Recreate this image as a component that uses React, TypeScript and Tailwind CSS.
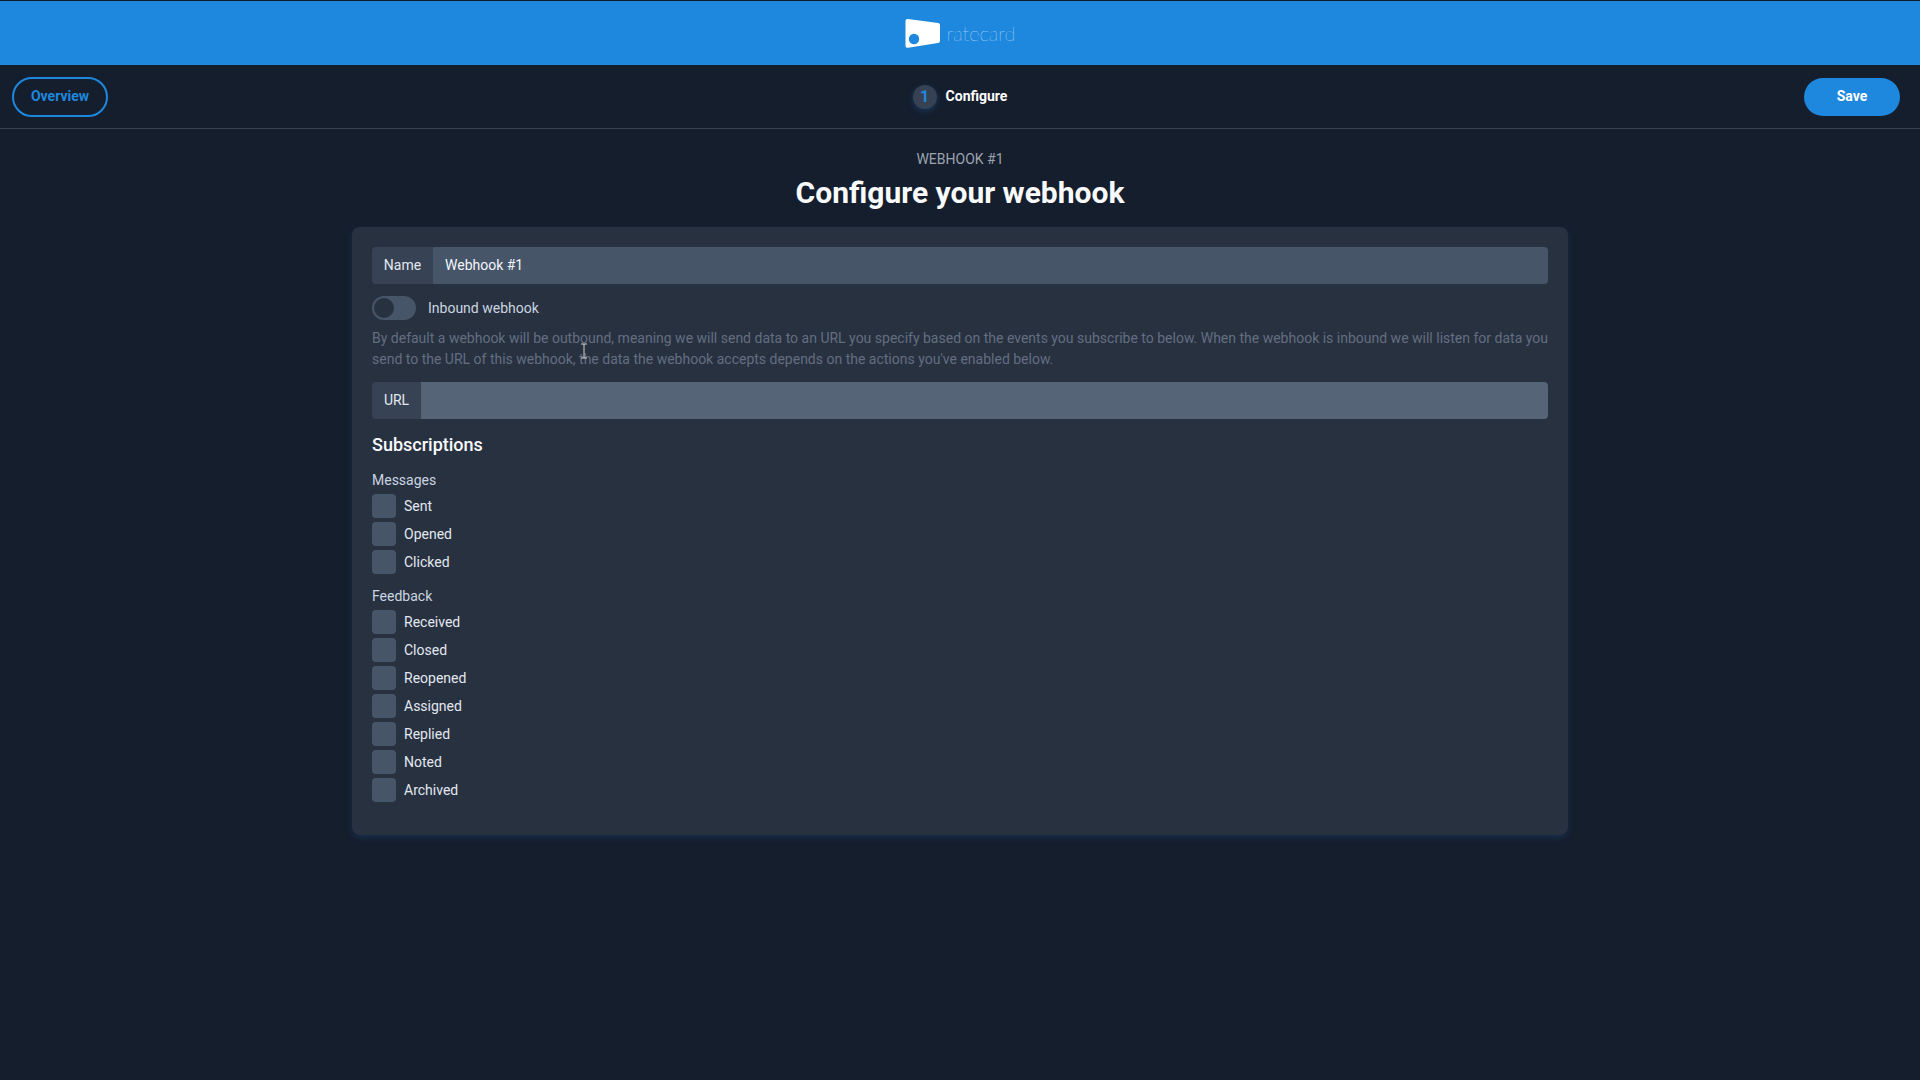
import React from 'react';

const messages = ['Sent', 'Opened', 'Clicked'];
const feedback = ['Received', 'Closed', 'Reopened', 'Assigned', 'Replied', 'Noted', 'Archived'];

const Logo: React.FC = () => (
  <svg width="36" height="31" viewBox="0 0 36 31" fill="none" xmlns="http://www.w3.org/2000/svg">
    <path d="M3 1L33 5C34.5 5.2 35 6 35 7.5V22.5C35 24 34.5 24.8 33 25L3 29.8C1.5 30 0.5 29 0.5 27.5V3C0.5 1.5 1.5 0.8 3 1Z" fill="white" />
    <circle cx="9" cy="21" r="5.2" fill="#1e88e0" />
  </svg>
);

const CheckRow: React.FC<{ label: string }> = ({ label }) => (
  <label className="flex items-center h-6 mb-1">
    <span className="w-6 h-6 rounded bg-[#475569] shrink-0" />
    <span className="ml-2 text-sm text-[#e2e8f0]">{label}</span>
  </label>
);

const InputRow: React.FC<{ label: string; value?: string; labelWidth: string; fill: string }> = ({ label, value, labelWidth, fill }) => (
  <div className="flex h-[37px] rounded overflow-hidden">
    <div className={`${labelWidth} flex items-center justify-center pb-px bg-[#374354] text-sm text-[#e2e8f0]`}>{label}</div>
    <div className={`flex-1 flex items-center px-3 pb-px text-sm text-[#f1f5f9] ${fill}`}>{value}</div>
  </div>
);

const App: React.FC = () => {
  return (
    <div className="relative min-h-[1080px] bg-[#151e2d] font-['Roboto',sans-serif] text-white">
      <div className="h-[65px] flex items-center justify-center gap-[6px] bg-[#1e88de] border-t border-[#0f1a2a]">
        <Logo />
        <span className="font-['Lato',sans-serif] font-thin text-xl leading-none text-white">ratecard</span>
      </div>

      <div className="h-[64px] flex items-center justify-between pl-3 pr-5 border-b border-[#374151]">
        <button className="w-[96px] h-10 pb-[2px] rounded-full border-2 border-[#1e88de] text-sm font-bold text-[#1e88de]">Overview</button>
        <div className="flex items-center gap-[9px] ml-[8px]">
          <span className="w-6 h-6 rounded-full bg-[#364254] flex items-center justify-center text-base font-bold text-[#1e88de] shadow-[0_2px_6px_rgba(30,136,222,0.25)]">1</span>
          <span className="pb-[2px] text-sm font-bold text-white">Configure</span>
        </div>
        <button className="w-[96px] h-[38px] pb-[2px] rounded-full bg-[#1e88de] text-sm font-bold text-white">Save</button>
      </div>

      <div className="flex flex-col items-center">
        <div className="mt-[20px] text-sm leading-5 text-[#9ca3af]">WEBHOOK #1</div>
        <h1 className="mt-[6px] text-3xl leading-9 font-bold text-[#f8fafc]">Configure your webhook</h1>

        <div className="mt-[16px] w-[1216px] h-[608px] p-5 rounded-lg bg-[#283140] shadow-[0_3px_6px_rgba(30,80,150,0.3)]">
          <InputRow label="Name" value="Webhook #1" labelWidth="w-[61px]" fill="bg-[#475569]" />

          <div className="mt-3 flex items-center h-6">
            <span className="w-11 h-6 rounded-full bg-[#475569] p-[2px]">
              <span className="block w-5 h-5 rounded-full bg-[#283140]" />
            </span>
            <span className="ml-3 text-sm text-[#cbd5e1]">Inbound webhook</span>
          </div>

          <p className="mt-[8px] text-sm leading-[21px] text-[#636e80]">
            By default a webhook will be outbound, meaning we will send data to an URL you specify based on the events you subscribe to below. When the webhook is inbound we will listen for data you send to the URL of this webhook, the data the webhook accepts depends on the actions you've enabled below.
          </p>

          <div className="mt-[12px]">
            <InputRow label="URL" labelWidth="w-[49px]" fill="bg-[#566477]" />
          </div>

          <h2 className="mt-[12px] text-lg leading-7 font-medium text-[#f8fafc]">Subscriptions</h2>

          <div className="mt-[11px] mb-[4px] text-sm leading-5 text-[#cbd5e1]">Messages</div>
          {messages.map((m) => <CheckRow key={m} label={m} />)}

          <div className="mt-[12px] mb-[4px] text-sm leading-5 text-[#cbd5e1]">Feedback</div>
          {feedback.map((f) => <CheckRow key={f} label={f} />)}
        </div>
      </div>

      {/* text cursor caught in the capture */}
      <svg className="absolute left-[580px] top-[343px]" width="8" height="16" viewBox="0 0 8 16" fill="none">
        <path d="M1 1H7M4 1V15M1 15H7" stroke="#d6d3c4" strokeWidth="1" />
      </svg>
    </div>
  );
};

export default App;
